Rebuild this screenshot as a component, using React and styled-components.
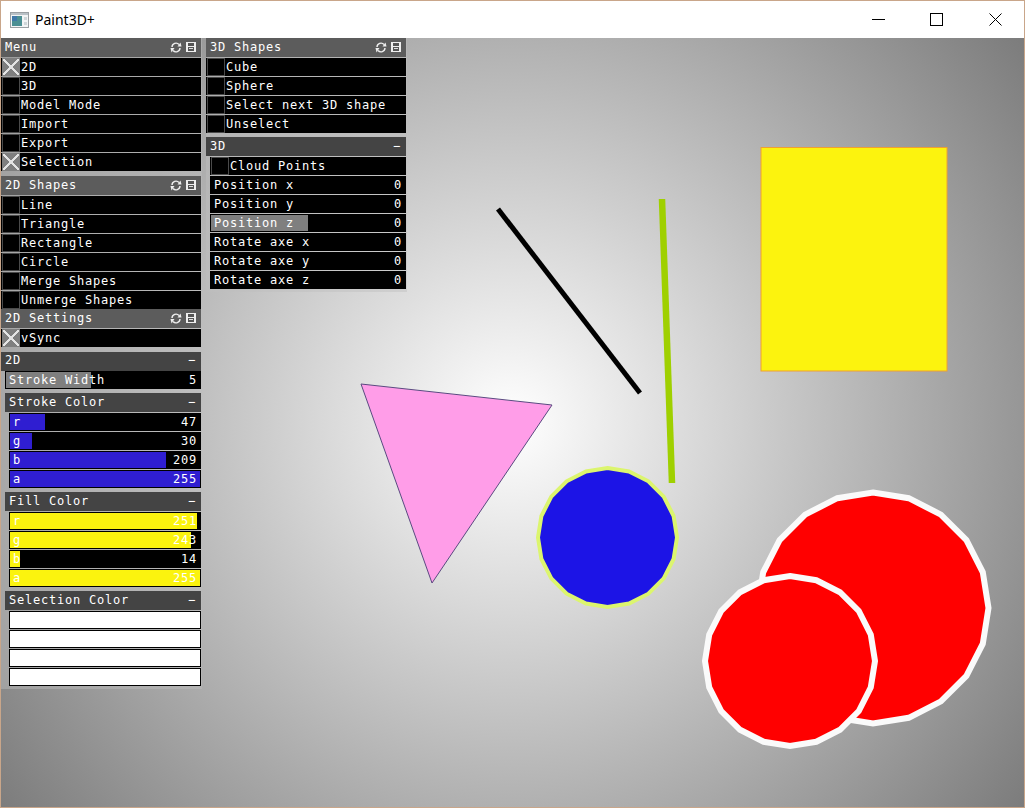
import React from 'react';
import styled, { createGlobalStyle } from 'styled-components';

const Global = createGlobalStyle`
  html, body { margin: 0; padding: 0; background: #fff; overflow: hidden; }
`;

const Window = styled.div`
  width: 1025px;
  height: 808px;
  box-sizing: border-box;
  border: 1px solid #c9a68a;
  display: flex;
  flex-direction: column;
`;

const TitleBar = styled.div`
  height: 37px;
  flex: none;
  background: #fff;
  display: flex;
  align-items: center;
  padding-left: 9px;
  font: 14px "Noto Sans", sans-serif;
  color: #000;
`;

const AppTitle = styled.span`
  margin-left: 6px;
  flex: 1;
`;

const WinButton = styled.div`
  width: 58px;
  height: 37px;
  margin-left: ${(p) => p.$gap || 0}px;
  display: flex;
  align-items: center;
  justify-content: center;
`;

const Stage = styled.div`
  flex: 1;
  position: relative;
  overflow: hidden;
  background: radial-gradient(circle 650px at 510px 384px, #fff 0, #7a7a7a 100%);
  display: flex;
  align-items: flex-start;
  gap: 4px;
`;

const Canvas = styled.svg`
  position: absolute;
  left: 0;
  top: 0;
`;

const Column = styled.div`
  position: relative;
  width: 201px;
  display: flex;
  flex-direction: column;
  font: 12px "DejaVu Sans Mono", monospace;
  letter-spacing: 0.78px;
  color: #fff;
  white-space: pre;
`;

const Panel = styled.div`
  background: rgba(190, 190, 190, 0.45);
  padding: 0 1px ${(p) => p.$bottom}px 0;
  margin-bottom: ${(p) => (p.$tight ? -1 : 0)}px;
`;

const Header = styled.div`
  height: 19px;
  margin: 0 0 ${(p) => (p.$dark ? 0 : 1)}px ${(p) => p.$indent || 0}px;
  background: ${(p) => (p.$dark ? '#444' : '#5c5c5c')};
  display: flex;
  align-items: center;
  justify-content: space-between;
  padding: 0 5px ${(p) => p.$lift || 0}px 4px;
  box-sizing: border-box;
`;

const HeaderIcons = styled.div`
  display: flex;
  align-items: center;
  gap: 4px;
`;

const Row = styled.div`
  height: 18px;
  margin: 0 0 1px ${(p) => p.$indent || 0}px;
  background: #000;
  display: flex;
  align-items: center;
`;

const Box = styled.div`
  width: 16px;
  height: 16px;
  margin: 0 1px 0 1px;
  flex: none;
  border: 1px solid ${(p) => (p.$on ? '#7f7f7f' : '#4a4a4a')};
  background: ${(p) =>
    p.$on
      ? `linear-gradient(45deg, transparent calc(50% - 1px), #e4e4e4 calc(50% - 1px), #e4e4e4 calc(50% + 1px), transparent calc(50% + 1px)),
         linear-gradient(-45deg, transparent calc(50% - 1px), #e4e4e4 calc(50% - 1px), #e4e4e4 calc(50% + 1px), transparent calc(50% + 1px)),
         #7f7f7f`
      : '#000'};
`;

const Slider = styled.div`
  height: 18px;
  box-sizing: border-box;
  margin: 0 0 1px ${(p) => p.$indent}px;
  border: 1px solid #000;
  background: linear-gradient(
    to right,
    ${(p) => p.$color} ${(p) => p.$pct}%,
    #000 ${(p) => p.$pct}%
  );
  display: flex;
  align-items: center;
  justify-content: space-between;
  padding: 0 3px;
`;

const SubGroup = styled.div`
  margin-top: 4px;
`;

const HeaderGap = styled.div`
  height: 1px;
`;

function RefreshIcon() {
  return (
    <svg width="12" height="11" viewBox="0 0 12 11">
      <path d="M2 5 A4 4 0 0 1 9 2.5" fill="none" stroke="#eee" strokeWidth="1.4" />
      <path d="M10 6 A4 4 0 0 1 3 8.5" fill="none" stroke="#eee" strokeWidth="1.4" />
      <path d="M7.5 4.5 L11.5 4.5 L10.5 0.5 Z" fill="#eee" />
      <path d="M0.5 6 L4.5 6 L1.5 10.5 Z" fill="#eee" />
    </svg>
  );
}

function SaveIcon() {
  return (
    <svg width="10" height="10" viewBox="0 0 10 10">
      <rect width="10" height="10" fill="#eee" />
      <rect x="2" y="1" width="6" height="3" fill="#555" />
      <rect x="2" y="5" width="6" height="4" fill="#555" />
      <rect x="3" y="6" width="4" height="1" fill="#ddd" />
    </svg>
  );
}

function PanelHeader({ title }) {
  return (
    <Header $lift={1}>
      <span>{title}</span>
      <HeaderIcons>
        <RefreshIcon />
        <SaveIcon />
      </HeaderIcons>
    </Header>
  );
}

function Toggle({ label, on, indent }) {
  return (
    <Row $indent={indent}>
      <Box $on={on} />
      {label}
    </Row>
  );
}

function Value({ label, value, indent, color, pct }) {
  return (
    <Slider $indent={indent} $color={color} $pct={pct}>
      <span>{label}</span>
      <span>{value}</span>
    </Slider>
  );
}

function ColorGroup({ title, color, values }) {
  return (
    <SubGroup>
      <Header $dark $indent={4} $lift={2}>
        {title}
        <span>−</span>
      </Header>
      <HeaderGap />
      {values.map((v, i) => (
        <Value
          key={i}
          label={'rgba'[i]}
          value={v}
          indent={8}
          color={color}
          pct={(v / 255) * 100}
        />
      ))}
    </SubGroup>
  );
}

// polygon approximation of a circle, vertex on top, like the app draws it
function ring(cx, cy, r, sides = 20) {
  const pts = [];
  for (let i = 0; i < sides; i++) {
    const a = (i / sides) * Math.PI * 2;
    pts.push(`${(cx + r * Math.sin(a)).toFixed(1)},${(cy - r * Math.cos(a)).toFixed(1)}`);
  }
  return pts.join(' ');
}

function Shapes() {
  return (
    <Canvas width="1023" height="769" viewBox="1 38 1023 769">
      <line x1="498" y1="209" x2="640" y2="393" stroke="#000" strokeWidth="5" />
      <line x1="662" y1="199" x2="672" y2="483" stroke="#9fd000" strokeWidth="6.5" />
      <rect x="761" y="147.5" width="186" height="223.5" fill="#fcf30e" stroke="#f0a030" strokeWidth="1" />
      <polygon points="361,384 552,405 432,583" fill="#ff9de8" stroke="#5a4a80" strokeWidth="1" />
      <polygon points={ring(607.5, 537.5, 69.5)} fill="#1c14e6" stroke="#dcf56e" strokeWidth="4" />
      <polygon points={ring(873, 608, 115.5)} fill="#f00" stroke="#fafafa" strokeWidth="6" />
      <polygon points={ring(790, 661, 85)} fill="#f00" stroke="#fafafa" strokeWidth="6" />
    </Canvas>
  );
}

export default function App() {
  return (
    <Window>
      <Global />
      <TitleBar>
        <svg width="19" height="16" viewBox="0 0 19 16">
          <rect x="0.5" y="0.5" width="18" height="15" fill="#f2f4f5" stroke="#9a9fa3" />
          <rect x="1" y="1" width="17" height="2" fill="#b9c1c7" />
          <rect x="2" y="4" width="10" height="10" fill="#4a8f93" />
          <rect x="2" y="4" width="5" height="5" fill="#3f78a8" />
          <rect x="14" y="5" width="3" height="3" fill="#cfd6d9" />
          <rect x="14" y="10" width="3" height="3" fill="#cfd6d9" />
        </svg>
        <AppTitle>Paint3D+</AppTitle>
        <WinButton>
          <svg width="13" height="13" viewBox="0 0 13 13">
            <path d="M0 6.5H13" stroke="#000" />
          </svg>
        </WinButton>
        <WinButton>
          <svg width="13" height="13" viewBox="0 0 13 13">
            <rect x="0.5" y="0.5" width="12" height="12" fill="none" stroke="#000" />
          </svg>
        </WinButton>
        <WinButton $gap={1}>
          <svg width="13" height="13" viewBox="0 0 13 13">
            <path d="M0.5 0.5L12.5 12.5M12.5 0.5L0.5 12.5" stroke="#000" />
          </svg>
        </WinButton>
      </TitleBar>
      <Stage>
        <Shapes />
        <Column>
          <Panel $bottom={4}>
            <PanelHeader title="Menu" />
            <Toggle label="2D" on />
            <Toggle label="3D" />
            <Toggle label="Model Mode" />
            <Toggle label="Import" />
            <Toggle label="Export" />
            <Toggle label="Selection" on />
          </Panel>
          <Panel $bottom={0} $tight>
            <PanelHeader title="2D Shapes" />
            <Toggle label="Line" />
            <Toggle label="Triangle" />
            <Toggle label="Rectangle" />
            <Toggle label="Circle" />
            <Toggle label="Merge Shapes" />
            <Toggle label="Unmerge Shapes" />
          </Panel>
          <Panel $bottom={4}>
            <PanelHeader title="2D Settings" />
            <Toggle label="vSync" on />
          </Panel>
          <Panel $bottom={2}>
            <Header $dark $lift={3}>
              2D
              <span>−</span>
            </Header>
            <Value label="Stroke Width" value="5" indent={4} color="#7f7f7f" pct={44} />
            <ColorGroup title="Stroke Color" color="#2f1ed1" values={[47, 30, 209, 255]} />
            <ColorGroup title="Fill Color" color="#fbf30e" values={[251, 243, 14, 255]} />
            <ColorGroup title="Selection Color" color="#fff" values={[255, 255, 255, 255]} />
          </Panel>
        </Column>
        <Column>
          <Panel $bottom={3}>
            <PanelHeader title="3D Shapes" />
            <Toggle label="Cube" />
            <Toggle label="Sphere" />
            <Toggle label="Select next 3D shape" />
            <Toggle label="Unselect" />
          </Panel>
          <Panel $bottom={2}>
            <Header $dark $lift={1}>
              3D
              <span>−</span>
            </Header>
            <HeaderGap />
            <Toggle label="Cloud Points" on={false} indent={4} />
            <Value label="Position x" value="0" indent={4} color="#7f7f7f" pct={0} />
            <Value label="Position y" value="0" indent={4} color="#7f7f7f" pct={0} />
            <Value label="Position z" value="0" indent={4} color="#7f7f7f" pct={50} />
            <Value label="Rotate axe x" value="0" indent={4} color="#7f7f7f" pct={0} />
            <Value label="Rotate axe y" value="0" indent={4} color="#7f7f7f" pct={0} />
            <Value label="Rotate axe z" value="0" indent={4} color="#7f7f7f" pct={0} />
          </Panel>
        </Column>
      </Stage>
    </Window>
  );
}
